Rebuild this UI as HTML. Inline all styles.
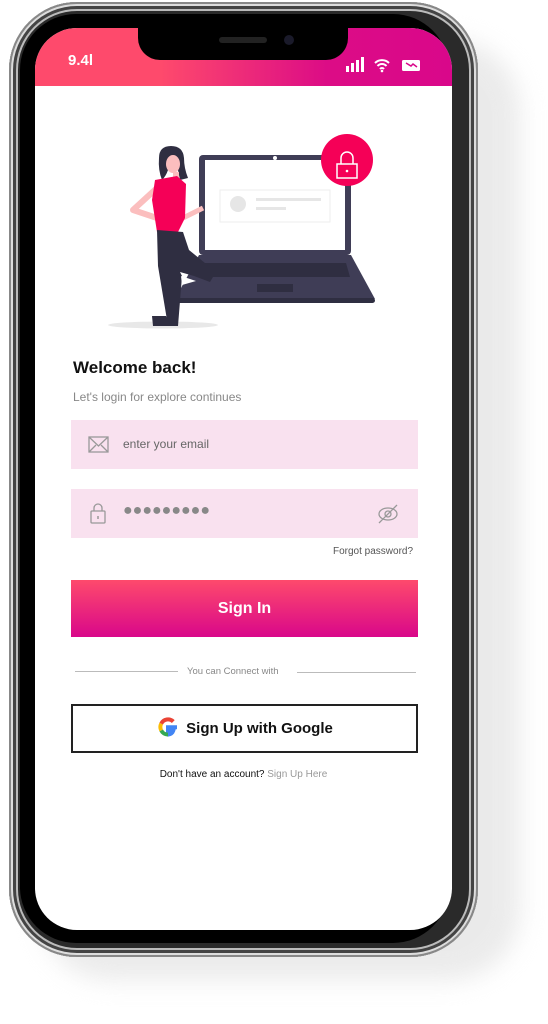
<!DOCTYPE html>
<html><head><meta charset="utf-8"><style>
*{margin:0;padding:0;box-sizing:border-box}
body{width:548px;height:1024px;background:#fff;position:relative;overflow:hidden;font-family:"Liberation Sans",sans-serif}
.shadow{position:absolute;left:40px;top:40px;width:480px;height:940px;border-radius:70px;background:#e6e6e6;filter:blur(12px);opacity:.8}
.frame{position:absolute;left:9px;top:2px;width:469px;height:955px;border-radius:68px;background:#2a2a2a;box-shadow:inset 0 0 0 2px #888,inset 0 0 0 4px #ddd,inset 0 0 0 7px #444,inset 0 0 0 9px #bbb}
.inner{position:absolute;left:20px;top:14px;width:429px;height:929px;border-radius:56px;background:#000}
.screen{position:absolute;left:35px;top:28px;width:417px;height:902px;border-radius:42px;background:#fff;overflow:hidden}
.status{position:absolute;left:0;top:0;width:417px;height:58px;background:linear-gradient(90deg,#fe4a6c 0%,#fe4a6c 30%,#dc0c86 70%,#d9078a 100%)}
.notch{position:absolute;left:103px;top:0;width:210px;height:32px;background:#000;border-radius:0 0 22px 22px}
.time{position:absolute;left:33px;top:24px;color:#fff;font-size:15px;font-weight:bold}
.h{position:absolute;left:38px;top:330px;font-size:17px;font-weight:bold;color:#111}
.sub{position:absolute;left:38px;top:362px;font-size:12px;color:#888}
.field{position:absolute;left:36px;width:347px;height:49px;background:#f9e1ef}
.ph{position:absolute;left:52px;top:17px;font-size:12px;color:#666}
.btn{position:absolute;left:36px;top:552px;width:347px;height:57px;background:linear-gradient(#fe4a6c,#d9078a);color:#fff;font-size:16px;font-weight:bold;text-align:center;line-height:57px}
.g{position:absolute;left:36px;top:676px;width:347px;height:49px;border:2px solid #222;font-size:15px;font-weight:bold;color:#111;text-align:center;line-height:45px}
</style></head><body>
<div class="shadow"></div>
<div class="frame"></div>
<div class="inner"></div>
<div class="screen">
 <div class="status"></div>
 <div class="notch"><div style="position:absolute;left:81px;top:9px;width:48px;height:6px;border-radius:3px;background:#222"></div><div style="position:absolute;left:146px;top:7px;width:10px;height:10px;border-radius:5px;background:#1a1a2a"></div></div>
 <div class="time">9.4l</div>
 <svg style="position:absolute;left:311px;top:28px" width="80" height="18">
  <rect x="0" y="10" width="3" height="6" fill="#fff"/><rect x="5" y="7" width="3" height="9" fill="#fff"/><rect x="10" y="4" width="3" height="12" fill="#fff"/><rect x="15" y="1" width="3" height="15" fill="#fff"/>
  <path d="M29 7a10 10 0 0 1 14 0M31.5 10a6 6 0 0 1 9 0M34 13a2.5 2.5 0 0 1 4 0" stroke="#fff" stroke-width="2" fill="none"/><circle cx="36" cy="15" r="1.3" fill="#fff"/>
  <rect x="56" y="4" width="18" height="11" rx="1.5" fill="#fff"/><path d="M60 7l5 3 2-2 4 3" stroke="#d9078a" stroke-width="1.5" fill="none"/>
 </svg>
 <svg style="position:absolute;left:0;top:90px" width="417" height="220">
  <ellipse cx="128" cy="207" rx="55" ry="3.5" fill="#e8e8e8"/>
  <rect x="164" y="37" width="152" height="100" rx="4" fill="#3f3d56"/>
  <rect x="170" y="42" width="140" height="90" fill="#fff"/>
  <circle cx="240" cy="40" r="2" fill="#fff"/>
  <rect x="185" y="72" width="110" height="32" fill="none" stroke="#eee"/>
  <circle cx="203" cy="86" r="8" fill="#e6e6e6"/>
  <rect x="221" y="80" width="65" height="3" fill="#e6e6e6"/><rect x="221" y="89" width="30" height="3" fill="#e6e6e6"/>
  <path d="M164 137h152l24 44H140z" fill="#3f3d56"/>
  <path d="M169 145h142l4 14H165z" fill="#2f2e41"/>
  <rect x="222" y="166" width="36" height="8" fill="#2f2e41"/>
  <rect x="140" y="180" width="200" height="5" rx="2.5" fill="#2f2e41"/>
  <circle cx="312" cy="42" r="26" fill="#f50057"/>
  <rect x="302" y="46" width="20" height="14" fill="none" stroke="#fff" stroke-width="1.5"/>
  <path d="M306 46v-6a6 6 0 0 1 12 0v6" fill="none" stroke="#fff" stroke-width="1.5"/><circle cx="312" cy="53" r="1.3" fill="#fff"/>
  <!-- person -->
  <path d="M124 40q0-12 12-12t13 12q0 10 4 20l-8 2-2-10-10 0q-2 6-6 10q-4-10-3-22z" fill="#2f2e41"/>
  <ellipse cx="138" cy="46" rx="7" ry="9" fill="#fbbebe"/>
  <path d="M138 54h6v6h-6z" fill="#fbbebe"/>
  <path d="M122 100l-24-8 24-22" fill="none" stroke="#fbbebe" stroke-width="6" stroke-linejoin="round"/>
  <path d="M148 100l20-10" stroke="#fbbebe" stroke-width="5"/>
  <path d="M120 62l22-4 9 8-1 34-8 16-20-2-5-32z" fill="#f50057"/>
  <path d="M122 112l26 2 6 18 27 22-6 10-16-6 -14-4 2 4-4 50-10 0-10-60z" fill="#2f2e41"/>
  <path d="M146 158l15 5-14 4z" fill="#fff"/>
  <path d="M117 198h14l5 10h-18z" fill="#2f2e41"/>
 </svg>
 <div class="h">Welcome back!</div>
 <div class="sub">Let's login for explore continues</div>
 <div class="field" style="top:392px">
  <svg style="position:absolute;left:17px;top:16px" width="21" height="17"><rect x="1" y="1" width="19" height="15" fill="none" stroke="#999" stroke-width="1.3"/><path d="M1 1l9.5 9 9.5-9M1 16l7-7M20 16l-7-7" fill="none" stroke="#999" stroke-width="1.3"/></svg>
  <div class="ph">enter your email</div>
 </div>
 <div class="field" style="top:461px">
  <svg style="position:absolute;left:19px;top:14px" width="16" height="21"><rect x="1" y="8" width="14" height="12" rx="1" fill="none" stroke="#999" stroke-width="1.3"/><path d="M4 8V5a4 4 0 0 1 8 0v3" fill="none" stroke="#999" stroke-width="1.3"/><path d="M8 13v3" stroke="#999" stroke-width="1.5"/></svg>
  <div style="position:absolute;left:52px;top:13px;font-size:16px;color:#888;letter-spacing:0px">●●●●●●●●●</div>
  <svg style="position:absolute;left:306px;top:14px" width="22" height="22"><ellipse cx="11" cy="11" rx="9" ry="6" fill="none" stroke="#999" stroke-width="1.3"/><circle cx="11" cy="11" r="3" fill="none" stroke="#999" stroke-width="1.3"/><path d="M2 20L20 2" stroke="#999" stroke-width="1.3"/></svg>
 </div>
 <div style="position:absolute;left:298px;top:518px;font-size:10px;color:#555">Forgot password?</div>
 <div class="btn">Sign In</div>
 <div style="position:absolute;left:40px;top:643px;width:103px;height:1px;background:#bbb"></div>
 <div style="position:absolute;left:262px;top:644px;width:119px;height:1px;background:#bbb"></div>
 <div style="position:absolute;left:152px;top:638px;font-size:9.5px;color:#888">You can Connect with</div>
 <div class="g"><svg width="24" height="24" viewBox="0 0 24 24" style="vertical-align:-6px;margin-right:6px">
  <path d="M21 12.2h-9v3.6h5.2a5.4 5.4 0 0 1-5.2 3.8" fill="none" stroke="#4285f4" stroke-width="4"/>
  <path d="M12 19.6a7.6 7.6 0 0 1-6.8-4.2" fill="none" stroke="#34a853" stroke-width="4"/>
  <path d="M5.2 15.4a7.6 7.6 0 0 1 0-6.8" fill="none" stroke="#fbbc05" stroke-width="4"/>
  <path d="M5.2 8.6A7.6 7.6 0 0 1 17.3 6.6" fill="none" stroke="#ea4335" stroke-width="4"/>
 </svg>Sign Up with Google</div>
 <div style="position:absolute;left:0;width:417px;top:741px;text-align:center;font-size:10px;color:#111">Don't have an account? <span style="color:#999">Sign Up Here</span></div>
</div>
</body></html>
